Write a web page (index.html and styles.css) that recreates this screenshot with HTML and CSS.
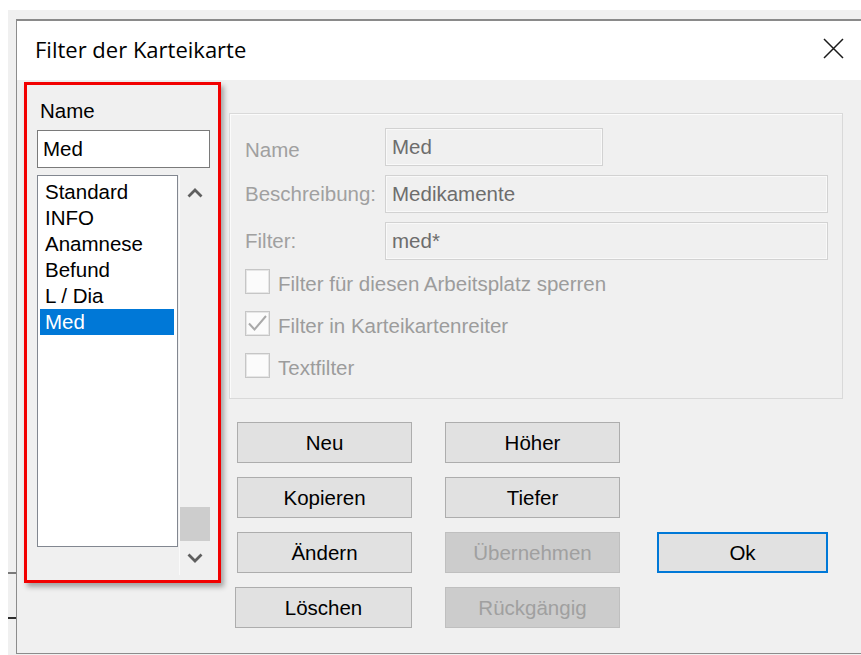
FILE: index.html
```html
<!DOCTYPE html>
<html lang="de">
<head>
<meta charset="utf-8">
<title>Filter der Karteikarte</title>
<link rel="stylesheet" href="styles.css">
</head>
<body>
<div class="desktop">
  <div class="parent-window">
    <div class="parent-edge">
      <span class="edge-mark edge-mark-light"></span>
      <span class="edge-mark edge-mark-dark"></span>
    </div>
    <div class="dialog">
      <div class="titlebar">
        <span class="title">Filter der Karteikarte</span>
        <span class="close" aria-label="Schließen">
          <svg width="21" height="21" viewBox="0 0 21 21"><path d="M1 1 L20 20 M20 1 L1 20" stroke="#1a1a1a" stroke-width="1.5" fill="none"/></svg>
        </span>
      </div>
      <div class="client">
        <div class="filter-list-panel">
          <div class="field-caption">Name</div>
          <div class="name-input">Med</div>
          <div class="list-row">
            <ul class="listbox">
              <li>Standard</li>
              <li>INFO</li>
              <li>Anamnese</li>
              <li>Befund</li>
              <li>L / Dia</li>
              <li class="selected">Med</li>
            </ul>
            <div class="scrollbar">
              <span class="scroll-arrow scroll-arrow-up">
                <svg width="16" height="10" viewBox="0 0 16 10"><polyline points="1.5,8.5 8,2 14.5,8.5" stroke="#5f5f5f" stroke-width="2.8" fill="none"/></svg>
              </span>
              <span class="scroll-track"></span>
              <span class="scroll-thumb"></span>
              <span class="scroll-arrow scroll-arrow-down">
                <svg width="16" height="10" viewBox="0 0 16 10"><polyline points="1.5,1.5 8,8 14.5,1.5" stroke="#5f5f5f" stroke-width="2.8" fill="none"/></svg>
              </span>
            </div>
          </div>
        </div>

        <div class="editor">
          <div class="group">
            <div class="field-row">
              <span class="field-label field-label-low">Name</span>
              <span class="field-value field-value-short">Med</span>
            </div>
            <div class="field-row">
              <span class="field-label">Beschreibung:</span>
              <span class="field-value">Medikamente</span>
            </div>
            <div class="field-row">
              <span class="field-label">Filter:</span>
              <span class="field-value">med*</span>
            </div>
            <div class="check-list">
              <div class="check-row">
                <span class="check-box"></span>
                <span class="check-label">Filter für diesen Arbeitsplatz sperren</span>
              </div>
              <div class="check-row">
                <span class="check-box">
                  <svg width="23" height="23" viewBox="0 0 23 23"><polyline points="3,11.5 8.5,17.5 20,4" stroke="#a9a9a9" stroke-width="2" fill="none"/></svg>
                </span>
                <span class="check-label">Filter in Karteikartenreiter</span>
              </div>
              <div class="check-row">
                <span class="check-box"></span>
                <span class="check-label">Textfilter</span>
              </div>
            </div>
          </div>

          <div class="buttons">
            <button class="btn">Neu</button>
            <button class="btn">Höher</button>
            <button class="btn">Kopieren</button>
            <button class="btn">Tiefer</button>
            <button class="btn">Ändern</button>
            <button class="btn" disabled>Übernehmen</button>
            <button class="btn btn-default">Ok</button>
            <button class="btn btn-shifted">Löschen</button>
            <button class="btn btn-last" disabled>Rückgängig</button>
          </div>
        </div>
      </div>
    </div>
  </div>
</div>
</body>
</html>
```

FILE: styles.css
```css
* {
  box-sizing: border-box;
}

html, body {
  margin: 0;
  padding: 0;
  background: #ffffff;
  overflow: hidden;
}

.desktop {
  width: 861px;
  height: 655px;
  padding: 10px 0 0 8px;
  background: #ffffff;
}

/* window behind the dialog */
.parent-window {
  display: flex;
  height: 645px;
  background: #f0f0f0;
}

.parent-edge {
  width: 8px;
  display: flex;
  flex-direction: column;
}

.edge-mark {
  display: block;
  width: 8px;
  height: 2px;
}

.edge-mark-light {
  margin-top: 562px;
  background: #7a7a7a;
}

.edge-mark-dark {
  margin-top: 43px;
  background: #2e2e2e;
}

/* dialog frame */
.dialog {
  width: 845px;
  margin-top: 9px;
  height: 635px;
  border-top: 2px solid #8a8a8a;
  border-left: 1px solid #8c8c8c;
  border-bottom: 1px solid #8c8c8c;
  display: flex;
  flex-direction: column;
}

.titlebar {
  height: 59px;
  flex: none;
  background: #ffffff;
  display: flex;
  justify-content: space-between;
  align-items: flex-start;
  padding: 13px 17px 0 18px;
}

.title {
  font-family: "Open Sans", "Liberation Sans", sans-serif;
  font-size: 22px;
  line-height: 31px;
  color: #000;
}

.close {
  display: block;
  margin-top: 4px;
  width: 21px;
  height: 21px;
}

.close svg {
  display: block;
}

.client {
  flex: 1;
  background: #f0f0f0;
  display: flex;
  align-items: flex-start;
  padding: 2px 0 0 7px;
  font-family: "Liberation Sans", Arial, sans-serif;
  font-size: 20.5px;
}

/* left column: filter names */
.filter-list-panel {
  width: 197px;
  height: 501px;
  flex: none;
  border: 3px solid #f20000;
  box-shadow: 3px 4px 5px rgba(0, 0, 0, 0.32);
  padding: 14px 0 0 10px;
}

.field-caption {
  padding-left: 3px;
  line-height: 23px;
  height: 23px;
  color: #000;
}

.name-input {
  margin-top: 8px;
  width: 173px;
  height: 38px;
  border: 1px solid #7a7a7a;
  background: #fff;
  padding-left: 5px;
  line-height: 36px;
  color: #000;
}

.list-row {
  margin-top: 7px;
  display: flex;
  align-items: flex-start;
}

.listbox {
  list-style: none;
  margin: 0;
  width: 141px;
  height: 372px;
  border: 1px solid #828790;
  background: #fff;
  padding: 3px 3px 0 2px;
}

.listbox li {
  line-height: 26px;
  height: 26px;
  padding-left: 5px;
  color: #000;
}

.listbox li.selected {
  background: #0078d7;
  color: #fff;
}

.scrollbar {
  margin-left: 1px;
  width: 31px;
  height: 400px;
  display: flex;
  flex-direction: column;
  background: #f0f0f0;
  box-shadow: inset 1px 0 0 #fafafa;
}

.scroll-arrow {
  display: flex;
  align-items: center;
  justify-content: center;
  flex: none;
}

.scroll-arrow svg {
  display: block;
}

.scroll-arrow-up {
  height: 36px;
  padding-bottom: 1px;
}

.scroll-arrow-down {
  height: 34px;
}

.scroll-track {
  flex: 1;
}

.scroll-thumb {
  flex: none;
  height: 34px;
  margin-left: 1px;
  width: 30px;
  background: #cdcdcd;
}

/* right column: filter details */
.editor {
  margin-left: 8px;
  margin-top: 31px;
  width: 614px;
}

.group {
  height: 286px;
  border: 1px solid #d9d9d9;
  box-shadow: inset 1px 1px 0 #fbfbfb;
  padding: 14px 0 0 15px;
}

.field-row {
  display: flex;
  height: 38px;
  margin-bottom: 9px;
}

.field-label {
  width: 140px;
  flex: none;
  color: #a0a0a0;
  line-height: 38px;
}

.field-label-low {
  padding-top: 3px;
}

.field-value {
  width: 443px;
  height: 38px;
  border: 1px solid #d2d2d2;
  box-shadow: inset 0 0 0 1px #f9f9f9;
  background: #f0f0f0;
  color: #6d6d6d;
  padding-left: 6px;
  line-height: 36px;
}

.field-value-short {
  width: 218px;
}

.check-list {
  margin-top: 7px;
  display: flex;
  flex-direction: column;
  gap: 17px;
}

.check-row {
  display: flex;
  align-items: flex-start;
  height: 25px;
}

.check-box {
  width: 25px;
  height: 25px;
  flex: none;
  border: 1px solid #c6c6c6;
  box-shadow: inset 0 0 0 1px #e6e6e6;
  background: #fbfbfb;
}

.check-box svg {
  display: block;
}

.check-label {
  margin-left: 8px;
  color: #9c9c9c;
  line-height: 25px;
  padding-top: 2px;
}

/* command buttons */
.buttons {
  margin-top: 23px;
  padding-left: 8px;
  display: grid;
  grid-template-columns: 175px 175px 175px;
  grid-auto-rows: 41px;
  column-gap: 33px;
  row-gap: 14px;
}

.btn {
  height: 41px;
  margin: 0;
  padding: 0;
  background: #e1e1e1;
  border: 1px solid #adadad;
  font-family: "Liberation Sans", Arial, sans-serif;
  font-size: 20.5px;
  color: #000;
  text-align: center;
}

.btn:nth-child(odd) {
  grid-column: 1;
}

.btn:nth-child(even) {
  grid-column: 2;
}

.btn:disabled {
  background: #cccccc;
  border-color: #bfbfbf;
  color: #a0a0a0;
}

.btn.btn-default {
  grid-column: 3;
  grid-row: 3;
  margin-left: 4px;
  border: 2px solid #0078d7;
}

.btn.btn-shifted {
  grid-column: 1;
  grid-row: 4;
  margin-left: -2px;
}

.btn.btn-last {
  grid-column: 2;
  grid-row: 4;
}
```
